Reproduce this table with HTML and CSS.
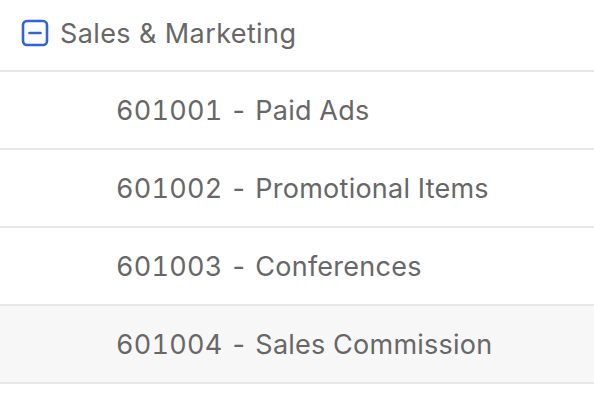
FILE: index.html
```html
<!DOCTYPE html>
<html lang="en">
<head>
    <meta charset="UTF-8">
    <title>Accounts - Sales &amp; Marketing</title>
    <link rel="stylesheet" href="styles.css">
</head>
<body>
    <div class="tree">
        <div class="group-row">
            <span class="toggle">
                <svg width="28" height="28" viewBox="0 0 28 28">
                    <rect x="2" y="2" width="24" height="24" rx="4" fill="none" stroke="#2f63dc" stroke-width="2.6"/>
                    <line x1="8.5" y1="14" x2="19.5" y2="14" stroke="#2f63dc" stroke-width="2.6" stroke-linecap="round"/>
                </svg>
            </span>
            <span class="group-name">Sales &amp; Marketing</span>
        </div>
        <div class="account-row">601001 - Paid Ads</div>
        <div class="account-row">601002 - Promotional Items</div>
        <div class="account-row">601003 - Conferences</div>
        <div class="account-row hover">601004 - Sales Commission</div>
    </div>
</body>
</html>
```

FILE: styles.css
```css
* {
    margin: 0;
    padding: 0;
    box-sizing: border-box;
}

body {
    background: #fff;
    font-family: Inter, 'Noto Sans', sans-serif;
    color: #676767;
}

.tree {
    width: 594px;
}

.group-row {
    display: flex;
    align-items: center;
    gap: 11px;
    height: 72px;
    padding: 0 0 4px 21px;
    border-bottom: 2px solid #e8e8e8;
}

.toggle {
    display: flex;
}

.group-name {
    font-size: 27px;
    letter-spacing: 0.4px;
}

.account-row {
    display: flex;
    align-items: center;
    height: 78px;
    padding-left: 116px;
    font-size: 27px;
    letter-spacing: 0.25px;
    font-variant-numeric: tabular-nums;
    border-bottom: 2px solid #e8e8e8;
}

.account-row.hover {
    background: #f7f7f7;
}
```
